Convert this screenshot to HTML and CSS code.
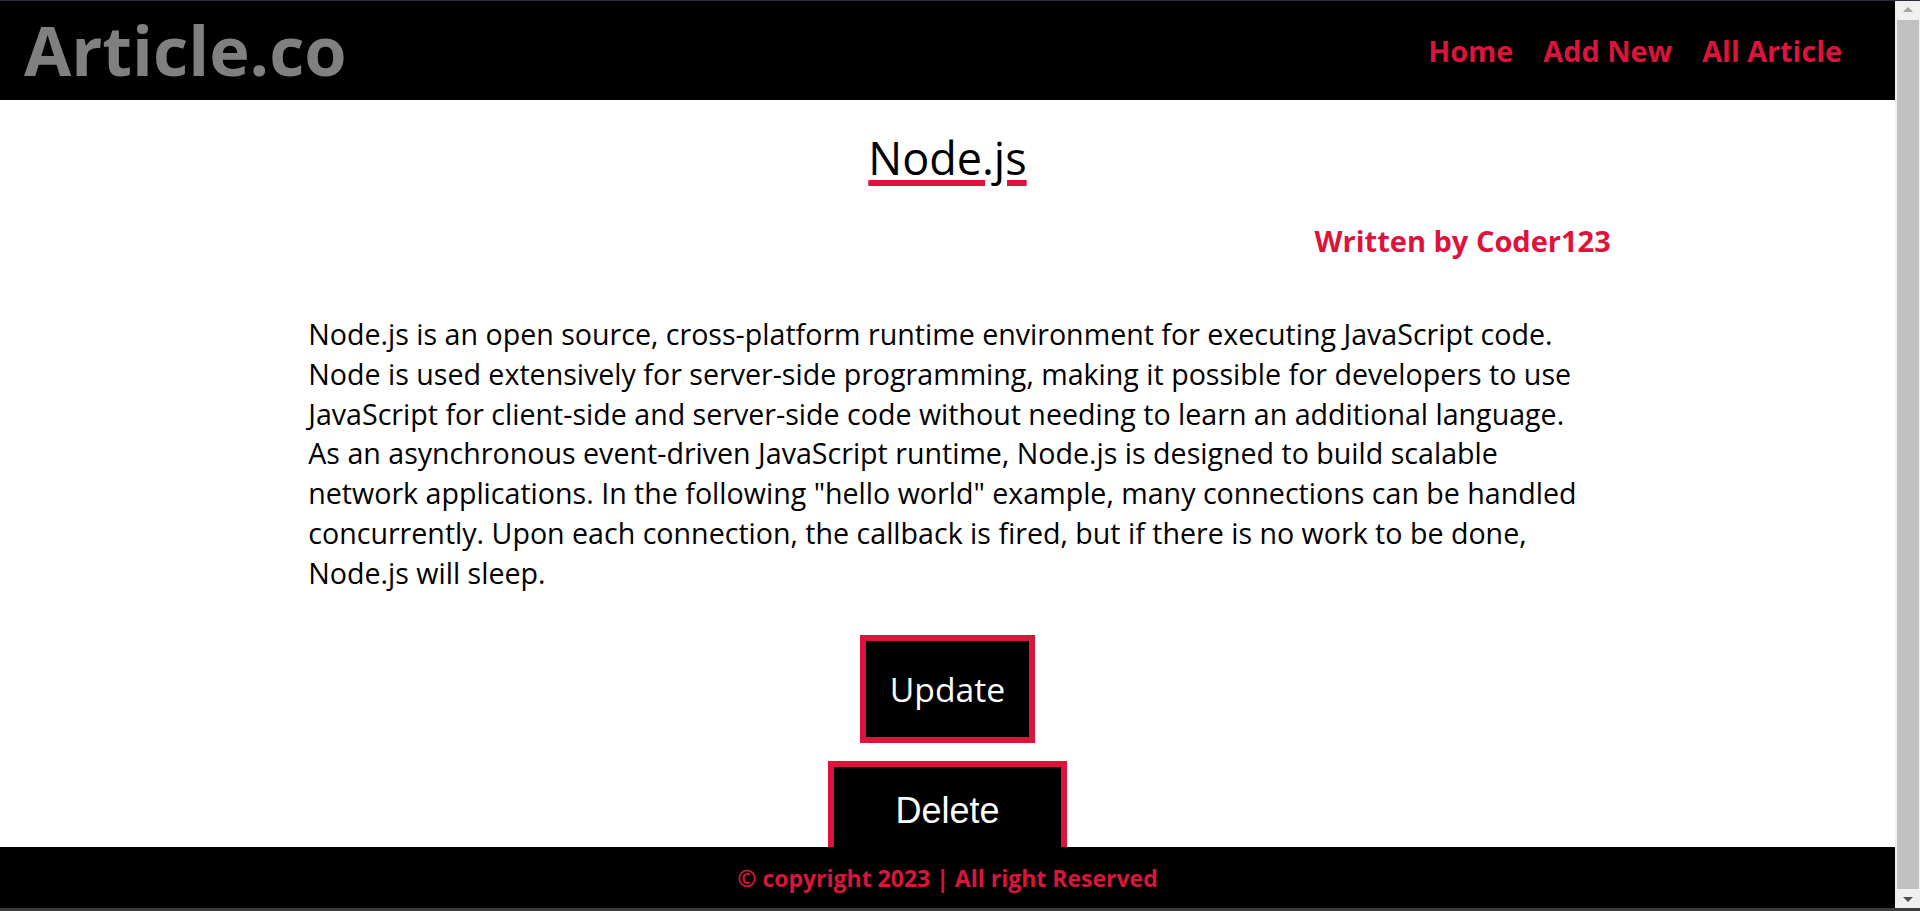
FILE: index.html
```html
<!DOCTYPE html>
<html lang="en">
<head>
<meta charset="utf-8">
<title>Article.co</title>
<link rel="stylesheet" href="styles.css">
</head>
<body>
<div class="window">
  <div class="viewport">
    <nav class="navbar">
      <a class="logo" href="#">Article.co</a>
      <ul class="nav-links">
        <li><a href="#">Home</a></li>
        <li><a href="#">Add New</a></li>
        <li><a href="#">All Article</a></li>
      </ul>
    </nav>
    <main class="content">
      <article class="article">
        <h1 class="title">Node.js</h1>
        <div class="author">Written by Coder123</div>
        <p class="body-text">Node.js is an open source, cross-platform runtime environment for executing JavaScript code. Node is used extensively for server-side programming, making it possible for developers to use JavaScript for client-side and server-side code without needing to learn an additional language. As an asynchronous event-driven JavaScript runtime, Node.js is designed to build scalable network applications. In the following "hello world" example, many connections can be handled concurrently. Upon each connection, the callback is fired, but if there is no work to be done, Node.js will sleep.</p>
        <div class="actions">
          <a class="btn-update" href="#">Update</a>
          <button class="btn-delete" type="button">Delete</button>
        </div>
      </article>
    </main>
    <footer class="footer">© copyright 2023 | All right Reserved</footer>
  </div>
  <div class="scrollbar" aria-hidden="true">
    <div class="sb-btn"><span class="arrow-up"></span></div>
    <div class="sb-track"><div class="sb-thumb"></div></div>
    <div class="sb-btn"><span class="arrow-down"></span></div>
  </div>
</div>
</body>
</html>
```
FILE: styles.css
```css
html, body {
  margin: 0;
  height: 100%;
}
body {
  font-family: "Open Sans", "Noto Sans", sans-serif;
  color: #000;
  background: #fff;
  overflow: hidden;
}
.window {
  height: 100vh;
  box-sizing: border-box;
  border-top: 1px solid #2b2c3a;
  border-bottom: 3px solid #3c3c3c;
  display: flex;
}
.viewport {
  flex: 1;
  min-width: 0;
  display: flex;
  flex-direction: column;
}
.navbar {
  flex: 0 0 99px;
  background: #000;
  display: flex;
  align-items: center;
  justify-content: space-between;
  padding: 0 53px 0 24px;
}
.logo {
  color: #808080;
  font-weight: 700;
  font-size: 68.5px;
  text-decoration: none;
  line-height: 1;
  margin-top: -1px;
}
.nav-links {
  list-style: none;
  display: flex;
  gap: 30px;
  margin: 0;
  padding: 0;
}
.nav-links a {
  color: #dc143c;
  font-weight: 700;
  font-size: 28.8px;
  text-decoration: none;
}
.content {
  flex: 1;
  min-height: 0;
  overflow: hidden;
}
.article {
  display: block;
  width: 70%;
  margin: 0 auto;
}
.title {
  margin: 28px 0 0;
  font-size: 45px;
  line-height: 60px;
  font-weight: 400;
  text-align: center;
  text-decoration: underline #dc143c;
  text-decoration-thickness: 6px;
  text-underline-offset: 5px;
}
.author {
  margin-top: 35px;
  text-align: right;
  color: #dc143c;
  font-weight: 700;
  font-size: 29px;
  line-height: 36px;
}
.body-text {
  margin: 55px 0 0;
  padding: 0 30px 0 24px;
  font-size: 28.6px;
  line-height: 39.8px;
}
.actions {
  margin-top: 42px;
  display: flex;
  flex-direction: column;
  align-items: center;
  gap: 18px;
}
.btn-update {
  display: block;
  padding: 24px;
  border: 6px solid #dc143c;
  background: #000;
  color: #fff;
  font-size: 33.7px;
  line-height: 48px;
  text-decoration: none;
}
.btn-delete {
  padding: 23px 61px;
  border: 6px solid #dc143c;
  background: #000;
  color: #fff;
  font-family: "Liberation Sans", Arial, sans-serif;
  font-size: 36px;
}
.footer {
  flex: 0 0 61px;
  background: #000;
  color: #dc143c;
  font-weight: 700;
  font-size: 23px;
  display: flex;
  align-items: center;
  justify-content: center;
}
.scrollbar {
  width: 25px;
  background: #f0f0f0;
  display: flex;
  flex-direction: column;
}
.sb-btn {
  height: 17px;
  display: flex;
  align-items: center;
  justify-content: center;
}
.sb-track {
  flex: 1;
  padding: 2px 1px 2px 2px;
  display: flex;
}
.sb-thumb {
  flex: 1;
  background: #c1c1c1;
}
.arrow-up {
  width: 0;
  height: 0;
  border-left: 5px solid transparent;
  border-right: 5px solid transparent;
  border-bottom: 5px solid #a3a3a3;
}
.arrow-down {
  width: 0;
  height: 0;
  border-left: 5px solid transparent;
  border-right: 5px solid transparent;
  border-top: 5px solid #505050;
}
```
